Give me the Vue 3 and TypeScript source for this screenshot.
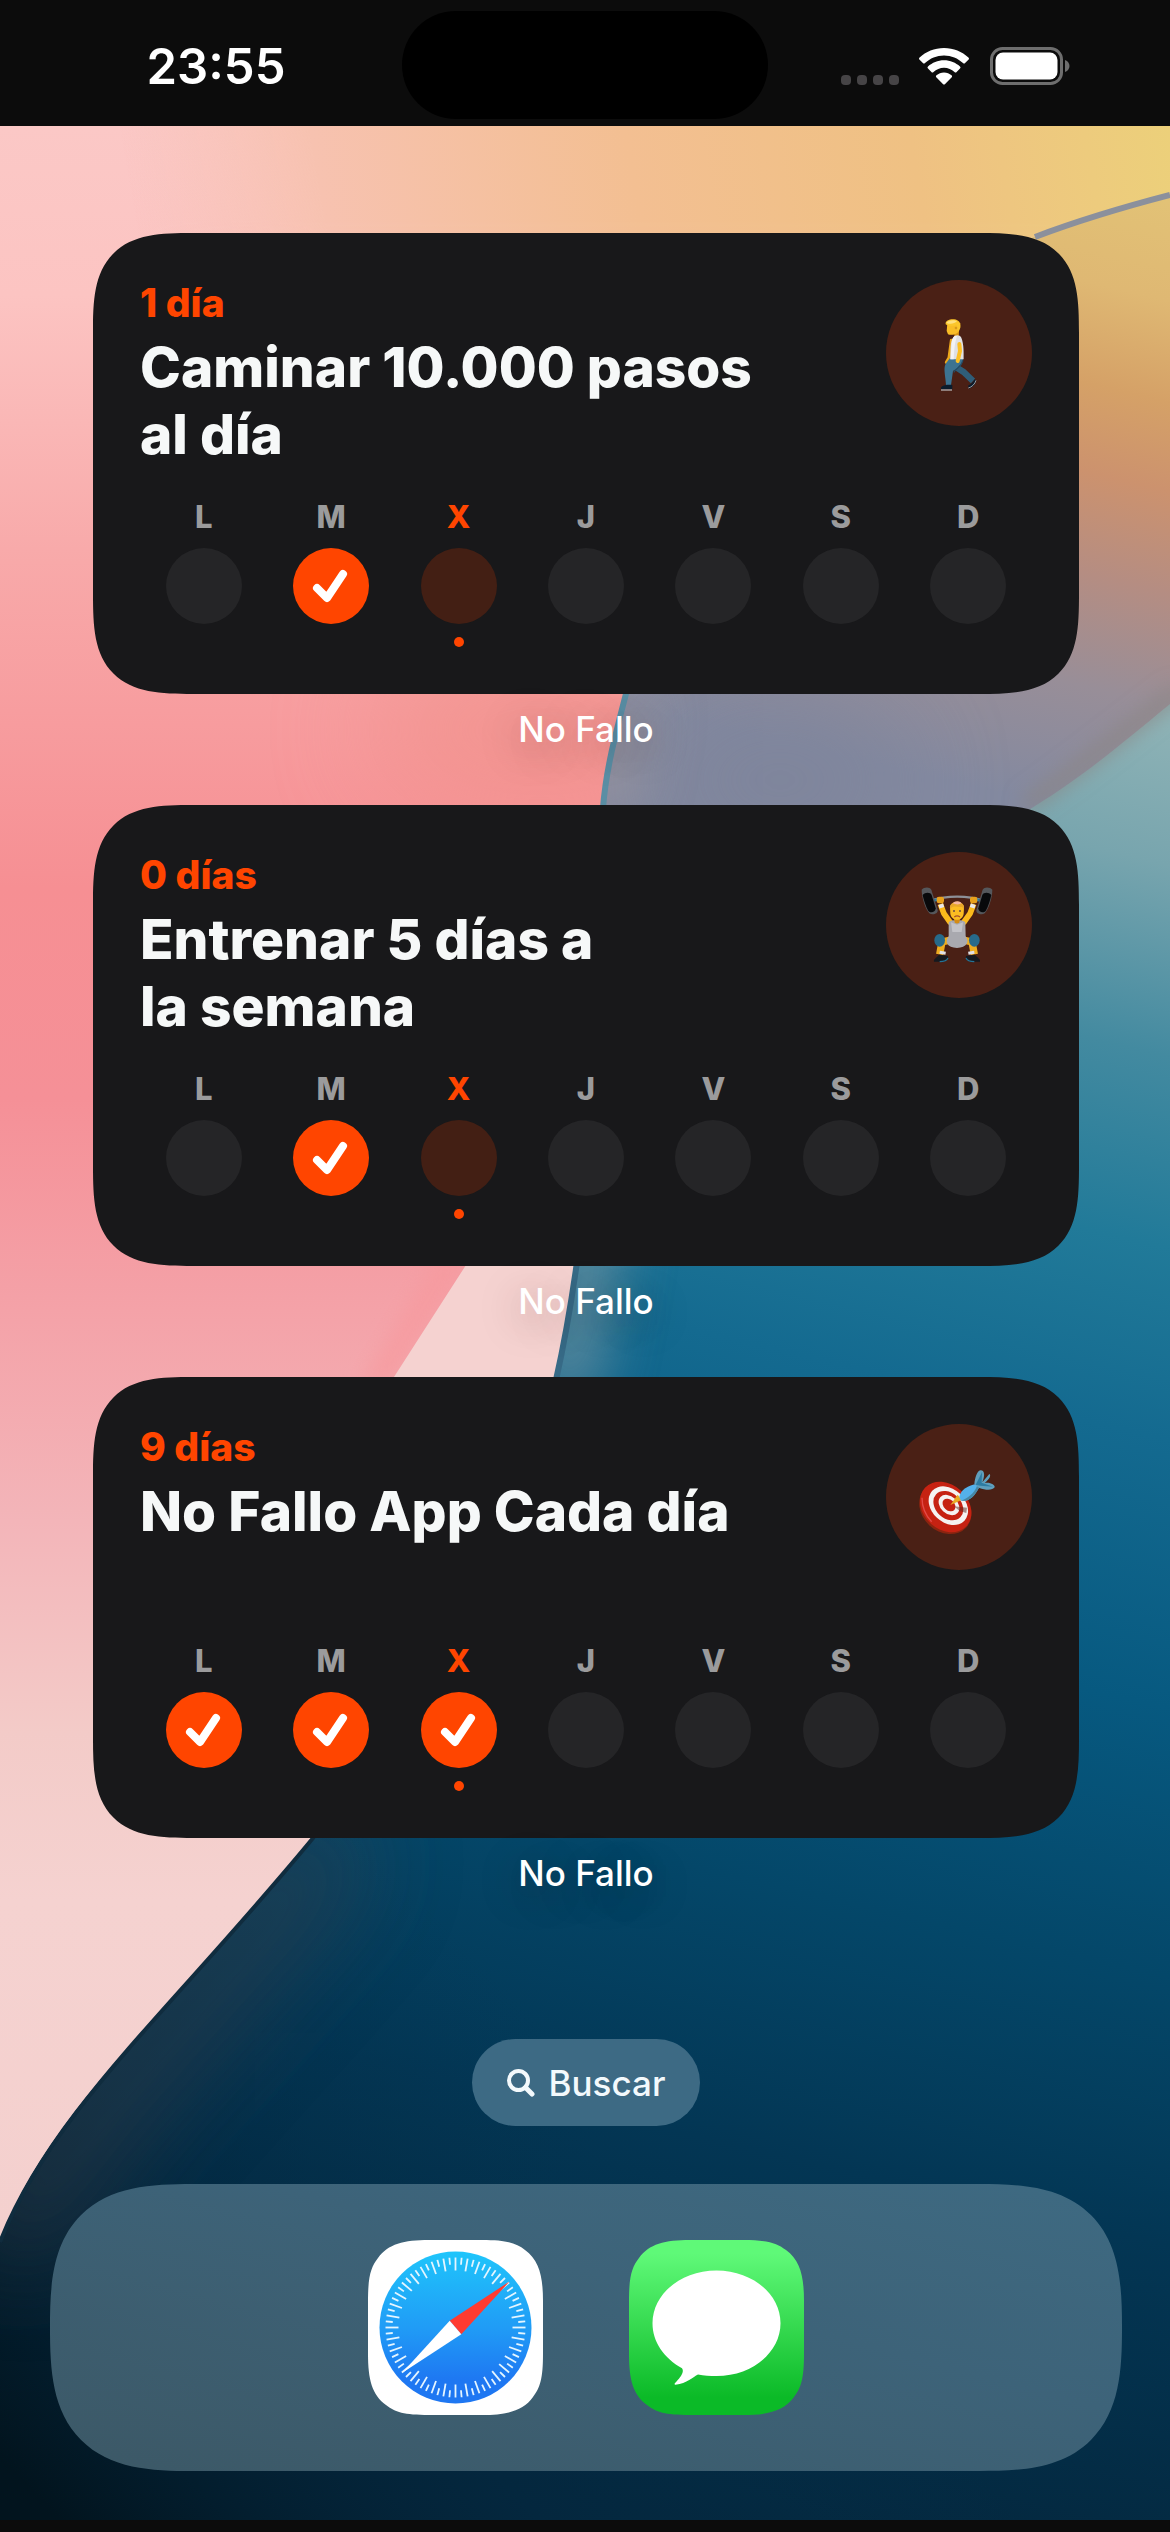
<script setup lang="ts">
type Emblem = 'walk' | 'lift' | 'target'

interface Habit {
  streak: string
  title: string
  emblem: Emblem
  done: number[]
}

const weekdays: string[] = ['L', 'M', 'X', 'J', 'V', 'S', 'D']
const today = 2

const habits: Habit[] = [
  { streak: '1 día', title: 'Caminar 10.000 pasos\nal día', emblem: 'walk', done: [1] },
  { streak: '0 días', title: 'Entrenar 5 días a\nla semana', emblem: 'lift', done: [1] },
  { streak: '9 días', title: 'No Fallo App Cada día', emblem: 'target', done: [0, 1, 2] },
]

const ticks = Array.from({ length: 72 }, (_, i) => ({ angle: i * 5, long: i % 2 === 0 }))
</script>

<template>
  <div class="phone">
    <header class="status">
      <time class="clock">23:55</time>
      <div class="island"></div>
      <div class="indicators">
        <span class="cell"><i v-for="n in 4" :key="n"></i></span>
        <svg class="wifi" viewBox="0 0 50 37" aria-label="Wi-Fi">
          <path d="M25 0C15.500 0 6.800 3.600 0.600 9.600a1.500 1.500 0 0 0 0 2.200l3.300 3.300a1.500 1.500 0 0 0 2.100 0C11 10.300 17.700 7.500 25 7.500s14 2.800 19 7.600a1.500 1.500 0 0 0 2.100 0l3.300-3.300a1.500 1.500 0 0 0 0-2.200C43.200 3.600 34.500 0 25 0Z" />
          <path d="M25 12.200c-6.200 0-11.800 2.400-16 6.200a1.500 1.500 0 0 0 0 2.200l3.400 3.400a1.500 1.500 0 0 0 2.100 0c2.800-2.600 6.500-4.200 10.500-4.200s7.700 1.600 10.500 4.200a1.500 1.500 0 0 0 2.100 0l3.400-3.400a1.500 1.500 0 0 0 0-2.200c-4.200-3.800-9.800-6.200-16-6.200Z" />
          <path d="M25 24.400c-2.900 0-5.500 1.100-7.500 2.900a1.500 1.500 0 0 0 0 2.200l6.400 6.500a1.500 1.500 0 0 0 2.200 0l6.400-6.500a1.500 1.500 0 0 0 0-2.200c-2-1.800-4.600-2.900-7.500-2.900Z" />
        </svg>
        <svg class="battery" viewBox="0 0 80 38" aria-label="Batería">
          <rect x="1.500" y="1.500" width="70" height="35" rx="11" fill="none" stroke="#6e6e6e" stroke-width="3" />
          <rect x="5.500" y="5.500" width="62" height="27" rx="7.500" />
          <path d="M75 13c3 1.200 4.500 3.400 4.500 6S78 23.800 75 25Z" fill="#6e6e6e" />
        </svg>
      </div>
    </header>

    <main class="home">
      <svg class="wallpaper" viewBox="0 126 1170 2394" preserveAspectRatio="none" aria-hidden="true">
        <defs>
          <linearGradient id="rose" gradientUnits="userSpaceOnUse" x1="0" y1="126" x2="0" y2="2240">
            <stop offset="0" stop-color="#fbc8c6" />
            <stop offset="0.080" stop-color="#fcc4c2" />
            <stop offset="0.200" stop-color="#f8aaaa" />
            <stop offset="0.360" stop-color="#f68f93" />
            <stop offset="0.460" stop-color="#f59097" />
            <stop offset="0.560" stop-color="#f4a2a8" />
            <stop offset="0.660" stop-color="#f3b5b9" />
            <stop offset="0.760" stop-color="#f3cbc8" />
            <stop offset="0.840" stop-color="#f5d2d0" />
            <stop offset="1" stop-color="#f4d0ce" />
          </linearGradient>
          <linearGradient id="dawn" gradientUnits="userSpaceOnUse" x1="150" y1="300" x2="1170" y2="120">
            <stop offset="0" stop-color="#f8c4b8" stop-opacity="0" />
            <stop offset="0.180" stop-color="#f7c2b0" />
            <stop offset="0.480" stop-color="#f3bf92" />
            <stop offset="0.750" stop-color="#efc183" />
            <stop offset="1" stop-color="#ecd07a" />
          </linearGradient>
          <linearGradient id="dawnFade" x1="0" y1="0" x2="0" y2="1">
            <stop offset="0" stop-color="#fff" />
            <stop offset="0.200" stop-color="#fff" />
            <stop offset="1" stop-color="#000" />
          </linearGradient>
          <mask id="dawnMask"><rect y="100" width="1170" height="600" fill="url(#dawnFade)" /></mask>
          <linearGradient id="petal" gradientUnits="userSpaceOnUse" x1="1170" y1="200" x2="1030" y2="800">
            <stop offset="0" stop-color="#e2c276" />
            <stop offset="0.160" stop-color="#dfb873" />
            <stop offset="0.320" stop-color="#d5a167" />
            <stop offset="0.460" stop-color="#cc926e" />
            <stop offset="0.620" stop-color="#b58d82" />
            <stop offset="0.800" stop-color="#988e98" />
            <stop offset="1" stop-color="#8389a0" />
          </linearGradient>
          <linearGradient id="sea" gradientUnits="userSpaceOnUse" x1="1120" y1="700" x2="700" y2="2520">
            <stop offset="0" stop-color="#8fb3b6" />
            <stop offset="0.080" stop-color="#78a5ae" />
            <stop offset="0.180" stop-color="#438aa0" />
            <stop offset="0.280" stop-color="#217a99" />
            <stop offset="0.380" stop-color="#146a90" />
            <stop offset="0.520" stop-color="#075980" />
            <stop offset="0.660" stop-color="#044769" />
            <stop offset="0.800" stop-color="#033654" />
            <stop offset="1" stop-color="#04263c" />
          </linearGradient>
          <linearGradient id="night" gradientUnits="userSpaceOnUse" x1="60" y1="2520" x2="560" y2="2040">
            <stop offset="0" stop-color="#02141e" />
            <stop offset="0.500" stop-color="#042840" stop-opacity="0.500" />
            <stop offset="1" stop-color="#033654" stop-opacity="0" />
          </linearGradient>
          <clipPath id="seaClip">
            <path d="M1170 195C1120 208 1080 220 1035 237C800 330 670 500 625 694C612 740 606 770 602 805C594 960 592 1160 576 1265C570 1305 564 1340 555 1376C510 1580 430 1710 315 1836C170 2010 50 2110 0 2240V2532H1170Z" />
          </clipPath>
          <filter id="soft" filterUnits="userSpaceOnUse" x="-200" y="0" width="1600" height="2600"><feGaussianBlur stdDeviation="30" /></filter>
          <filter id="softer" filterUnits="userSpaceOnUse" x="-200" y="0" width="1600" height="2600"><feGaussianBlur stdDeviation="50" /></filter>
          <filter id="slight" filterUnits="userSpaceOnUse" x="-200" y="0" width="1600" height="2600"><feGaussianBlur stdDeviation="10" /></filter>
        </defs>
        <rect y="100" width="1170" height="2440" fill="url(#rose)" />
        <rect y="100" width="1170" height="600" fill="url(#dawn)" mask="url(#dawnMask)" />
        <ellipse cx="540" cy="730" rx="170" ry="90" fill="#ef8f86" opacity="0.500" filter="url(#softer)" />
        <path d="M470 1255L390 1386L360 1386L440 1255Z" fill="#f7999d" opacity="0.700" filter="url(#slight)" />
        <path d="M500 1200L466 1265L394 1377L300 1500H700V1200Z" fill="#f5d2d0" />
        <g clip-path="url(#seaClip)">
          <rect y="100" width="1170" height="2440" fill="url(#sea)" />
          <rect y="1500" width="1170" height="1040" fill="url(#night)" />
          <path d="M606 1000C600 1200 590 1280 560 1400" fill="none" stroke="#8aa0a8" stroke-width="50" opacity="0.750" filter="url(#soft)" />
          <path d="M340 1830C200 2000 70 2110 0 2250" fill="none" stroke="#3a4048" stroke-width="90" opacity="0.550" filter="url(#softer)" />
          <path d="M1170 100V704C1120 745 1085 775 1035 806C900 890 760 960 600 1010L500 900V100Z" fill="url(#petal)" />
          <ellipse cx="780" cy="780" rx="130" ry="80" fill="#7d839a" opacity="0.600" filter="url(#softer)" />
          <path d="M625 690L600 810" stroke="#a39a9e" stroke-width="50" opacity="0.700" filter="url(#soft)" />
          <path d="M1180 690C1120 735 1085 765 1025 806" fill="none" stroke="#8b8583" stroke-width="12" filter="url(#slight)" />
        </g>
        <path d="M1170 195C1120 208 1080 220 1035 237" fill="none" stroke="#8b909c" stroke-width="6" />
        <path d="M627 690C614 740 606 770 603 808" fill="none" stroke="#5a8ea4" stroke-width="6" />
        <path d="M577 1262C571 1305 565 1340 556 1380" fill="none" stroke="#376a86" stroke-width="6" />
        <path d="M318 1832C172 2010 52 2110 0 2242" fill="none" stroke="#102c3e" stroke-width="4" />
      </svg>

      <section v-for="habit in habits" :key="habit.title" class="widget">
        <article class="card">
          <div class="head">
            <div class="copy">
              <p class="streak">{{ habit.streak }}</p>
              <h2 class="title">{{ habit.title }}</h2>
            </div>
            <svg v-if="habit.emblem === 'walk'" class="emblem" viewBox="79 59 438 438" aria-hidden="true">
              <path d="M285 318L312 335L340 362" fill="none" stroke="#2f5d78" stroke-width="19" stroke-linejoin="round" />
              <path d="M325 376C332 374 340 366 345 357L349 360C349 370 340 381 328 385Z" fill="#0c1c2c" />
              <path d="M326 383C337 380 346 371 349 360" fill="none" stroke="#d4dbe0" stroke-width="2" />
              <path d="M275 240L268 292L260 306" fill="none" stroke="#eda81c" stroke-width="9" stroke-linecap="round" />
              <path d="M271 293L310 294C310 315 294 322 280 332L274 375H259C258 348 250 325 258 310Z" fill="#3c7391" />
              <path d="M310 300C304 322 290 322 282 336" fill="none" stroke="#244c66" stroke-width="4" />
              <path d="M249 377C257 373 268 373 278 374L278 387H244C243 382 245 379 249 377Z" fill="#0c1c2c" />
              <path d="M244 389H277" stroke="#d4dbe0" stroke-width="3" />
              <path d="M284 215L298 213L297 232L284 230Z" fill="#dd9615" />
              <path d="M277 238C283 224 298 220 305 232C313 252 312 276 312 297H272C273 276 271 254 277 238Z" fill="#dfe0e4" />
              <path d="M277 240C281 226 288 224 292 228C283 255 284 275 282 297H272Z" fill="#f3f3f5" />
              <path d="M299 251L301 272L294 302" fill="none" stroke="#fcbf24" stroke-width="12" stroke-linecap="round" stroke-linejoin="round" />
              <path d="M263 190L261 212L265 222C275 226 291 222 297 214L302 188Z" fill="#f9bd26" />
              <path d="M258 192C256 181 270 176 283 177C298 178 305 190 302 202L297 214L291 206L292 195C281 198 266 198 258 192Z" fill="#fbc62a" />
              <path d="M260 187C270 178 284 178 292 183C284 191 270 193 260 187Z" fill="#ffe07d" />
              <circle cx="289" cy="203" r="4" fill="#d99a1a" />
            </svg>
            <svg v-else-if="habit.emblem === 'lift'" class="emblem" viewBox="79 65 438 438" aria-hidden="true">
              <path d="M215 210C260 195 325 195 370 210" fill="none" stroke="#8d9097" stroke-width="7" />
              <path d="M219 211L234 208M350 208L365 211" stroke="#2a7aa0" stroke-width="8" />
              <path d="M186 178C193 170 210 169 215 178L234 240C236 250 218 256 209 249C196 235 186 200 186 178Z" fill="#55575b" />
              <path d="M189 194C197 184 213 186 216 194L228 234C228 246 212 249 206 242C198 228 192 208 189 194Z" fill="#08090b" />
              <path d="M398 178C391 170 374 169 369 178L350 240C348 250 366 256 375 249C388 235 398 200 398 178Z" fill="#55575b" />
              <path d="M395 194C387 184 371 186 368 194L356 234C356 246 372 249 378 242C386 228 392 208 395 194Z" fill="#08090b" />
              <path d="M242 221L253 250L273 278M342 221L331 250L311 278" fill="none" stroke="#fcba1c" stroke-width="17" stroke-linejoin="round" />
              <path d="M238 229L252 225M332 225L346 229" stroke="#e9e9ee" stroke-width="11" />
              <rect x="231" y="199" width="22" height="20" rx="7" fill="#e8a11c" />
              <rect x="331" y="199" width="22" height="20" rx="7" fill="#e8a11c" />
              <path d="M240 372L247 335L285 326M344 372L337 335L299 326" fill="none" stroke="#eeac1f" stroke-width="22" stroke-linejoin="round" />
              <path d="M267 276C275 267 309 267 317 276L318 318C330 335 322 352 292 353C262 352 254 335 267 318Z" fill="#a9a9af" />
              <path d="M274 276L292 283L310 276L306 305H278Z" fill="#c3c3c8" />
              <path d="M282 264H302L299 276Q292 283 285 276Z" fill="#d58c15" />
              <path d="M271 231C271 211 313 211 313 231L312 250C308 274 276 274 272 250Z" fill="#fbbd22" />
              <path d="M271 236C268 207 316 207 313 236L307 229C296 232 281 223 271 236Z" fill="#e7a72b" />
              <path d="M279 219C285 211 301 211 306 219C298 224 287 223 279 219Z" fill="#f5b7a0" />
              <circle cx="283" cy="242" r="3" fill="#6b4c45" /><circle cx="301" cy="242" r="3" fill="#6b4c45" />
              <path d="M284 260Q292 253 301 260" fill="none" stroke="#a5502a" stroke-width="4" />
              <ellipse cx="240" cy="330" rx="16" ry="19" fill="#276a8a" />
              <ellipse cx="344" cy="330" rx="16" ry="19" fill="#276a8a" />
              <path d="M240 366L258 369M326 369L344 366" stroke="#e1e1e7" stroke-width="9" />
              <path d="M238 373L265 377C267 387 258 395 242 394H223C221 386 229 384 238 373ZM346 373L319 377C317 387 326 395 342 394H361C363 386 355 384 346 373Z" fill="#15191f" />
              <path d="M240 394C251 394 262 390 265 383M344 394C333 394 322 390 319 383" fill="none" stroke="#247396" stroke-width="4" />
            </svg>
            <svg v-else class="emblem" viewBox="79 69 438 438" aria-hidden="true">
              <ellipse cx="257" cy="322" rx="85" ry="70" transform="rotate(43 257 322)" fill="#8b2410" />
              <ellipse cx="258" cy="318" rx="85" ry="67" transform="rotate(43 258 318)" fill="#c62212" />
              <ellipse cx="266" cy="314" rx="66" ry="50" transform="rotate(43 266 314)" fill="#f5f2f1" />
              <ellipse cx="266" cy="314" rx="50" ry="38" transform="rotate(43 266 314)" fill="#c62212" />
              <ellipse cx="268" cy="312" rx="35" ry="26" transform="rotate(43 268 312)" fill="#f5f2f1" />
              <ellipse cx="268" cy="312" rx="22" ry="16" transform="rotate(43 268 312)" fill="#c62212" />
              <path d="M187 290C187 315 197 342 216 362" fill="none" stroke="#e14a47" stroke-width="4" />
              <path d="M283 316L322 320L320 336L300 330Z" fill="#5b2a22" opacity="0.500" />
              <path d="M272 312L294 281L306 297Z" fill="#e9ac25" />
              <path d="M299 288C302 265 326 253 352 248L359 258C345 287 327 303 304 299Z" fill="#54b1ea" />
              <path d="M304 299C326 303 345 287 359 258L352 255C343 278 324 292 304 299Z" fill="#4787a4" />
              <path d="M344 249C346 230 352 210 362 208C376 207 376 225 368 244L389 219C395 222 390 234 375 246C390 242 407 251 405 259C399 269 378 268 359 261Z" fill="#5f9fbd" />
              <path d="M348 251L367 214L366 245L400 257L362 254Z" fill="#2d7ca3" />
            </svg>
          </div>

          <ul class="week">
            <li v-for="(day, i) in weekdays" :key="day" class="day" :class="{ today: i === today, done: habit.done.includes(i) }">
              <span class="letter">{{ day }}</span>
              <span class="disc">
                <svg v-if="habit.done.includes(i)" viewBox="0 0 76 76" aria-label="Hecho">
                  <path d="M24 40L34 50L50 26" fill="none" stroke="#fff" stroke-width="8" stroke-linecap="round" stroke-linejoin="round" />
                </svg>
              </span>
              <span class="dot"></span>
            </li>
          </ul>
        </article>
        <p class="caption">No Fallo</p>
      </section>

      <button class="search" type="button">
        <svg viewBox="0 0 28 28" aria-hidden="true">
          <circle cx="11.500" cy="11.500" r="9.500" />
          <path d="M18.500 18.500L25 25" stroke-width="5" />
        </svg>
        <span>Buscar</span>
      </button>

      <nav class="dock" aria-label="Dock">
        <button class="app" type="button" aria-label="Safari">
          <svg viewBox="0 0 175 175">
            <defs>
              <linearGradient id="compass" x1="0" y1="0" x2="0" y2="1">
                <stop offset="0" stop-color="#1fc5fb" />
                <stop offset="0.500" stop-color="#209cf6" />
                <stop offset="0.850" stop-color="#1e77f2" />
              </linearGradient>
            </defs>
            <path d="M61 0H114C139 0 148 3 157 10C171 20 175 36 175 61V114C175 139 172 148 165 157C155 171 139 175 114 175H61C36 175 27 172 18 165C4 155 0 139 0 114V61C0 36 3 27 10 18C20 4 36 0 61 0Z" fill="#fff" />
            <circle cx="87.500" cy="87.500" r="76" fill="url(#compass)" />
            <path v-for="tick in ticks" :key="tick.angle" :d="tick.long ? 'M87.500 17.500V30.500' : 'M87.500 17.500V24.500'" :transform="`rotate(${tick.angle} 87.500 87.500)`" stroke="#e4f5ff" stroke-width="1.800" />
            <path d="M141.500 41.500L81.700 80.700L93.300 94.300Z" fill="#ff3b30" />
            <path d="M34 133L81.700 80.700L93.300 94.300Z" fill="#fff" />
          </svg>
        </button>
        <button class="app" type="button" aria-label="Mensajes">
          <svg viewBox="0 0 175 175">
            <defs>
              <linearGradient id="leaf" x1="0" y1="0" x2="0" y2="1">
                <stop offset="0.080" stop-color="#5ff978" />
                <stop offset="0.500" stop-color="#35d94f" />
                <stop offset="0.900" stop-color="#0bba27" />
              </linearGradient>
            </defs>
            <path d="M61 0H114C139 0 148 3 157 10C171 20 175 36 175 61V114C175 139 172 148 165 157C155 171 139 175 114 175H61C36 175 27 172 18 165C4 155 0 139 0 114V61C0 36 3 27 10 18C20 4 36 0 61 0Z" fill="url(#leaf)" />
            <path d="M87.500 30.500C123 30.500 151.500 54 151.500 83.300C151.500 112.500 123 136 87.500 136C81 136 75 135.500 69 134.500C64 137 58 143.500 46.500 144.700C44.500 144.500 46 143 47.500 141.500C52 137 55.500 131.500 53 128.300C35 118 23.500 102 23.500 83.300C23.500 54 52 30.500 87.500 30.500Z" fill="#fff" />
          </svg>
        </button>
      </nav>
    </main>
  </div>
</template>

<style>
body {
  margin: 0;
  background: #0c0c0c;
}
</style>

<style scoped>
.phone {
  display: flex;
  flex-direction: column;
  min-height: 100vh;
  font-family: Inter, "Liberation Sans", sans-serif;
  color: #fff;
  background: #0c0c0c;
}

p,
h2,
ul {
  margin: 0;
  padding: 0;
}

button {
  border: 0;
  padding: 0;
  font: inherit;
  color: inherit;
  background: none;
}

svg {
  display: block;
}

.status {
  display: grid;
  grid-template-columns: 1fr 366px 1fr;
  align-items: center;
  height: 126px;
}

.clock {
  padding: 8px 0 0 30px;
  text-align: center;
  font-size: 49px;
  font-weight: 600;
  line-height: 60px;
}

.island {
  height: 108px;
  margin-top: 4px;
  border-radius: 54px;
  background: #000;
}

.indicators {
  display: flex;
  align-items: flex-end;
  justify-content: flex-end;
  padding: 6px 100px 0 0;
}

.cell {
  display: flex;
  gap: 6px;
  margin-right: 20px;
}

.cell i {
  width: 10px;
  height: 10px;
  border-radius: 4px;
  background: #464446;
}

.wifi {
  width: 50px;
  height: 37px;
  margin-right: 21px;
  fill: #fff;
}

.battery {
  width: 80px;
  height: 38px;
  fill: #fff;
}

.home {
  position: relative;
  z-index: 0;
  display: flex;
  flex: 1;
  flex-direction: column;
  align-items: center;
  margin-bottom: 12px;
  padding: 107px 48px 49px 50px;
}

.wallpaper {
  position: absolute;
  z-index: -1;
  inset: 0;
  width: 100%;
  height: 100%;
}

.widget {
  align-self: stretch;
  margin: 0 43px 55px;
}

.card {
  padding: 47px;
  border-radius: 72px;
  background: #18181a;
}

.head {
  display: flex;
  align-items: flex-start;
  justify-content: space-between;
}

.streak {
  font-size: 39px;
  font-weight: 800;
  line-height: 46px;
  color: #ff4500;
}

.title {
  min-height: 134px;
  margin-top: 8px;
  font-size: 55px;
  font-weight: 800;
  line-height: 67px;
  white-space: pre-line;
  color: #f6f8f8;
}

.emblem {
  flex: none;
  width: 146px;
  height: 146px;
  border-radius: 50%;
  background: #4a2015;
}

.week {
  display: grid;
  grid-template-columns: repeat(7, 1fr);
  margin-top: 30px;
  list-style: none;
}

.day {
  display: flex;
  flex-direction: column;
  align-items: center;
}

.letter {
  font-size: 31px;
  font-weight: 800;
  line-height: 38px;
  color: #9b9b9c;
}

.disc {
  width: 76px;
  height: 76px;
  margin: 12px 0 13px;
  border-radius: 50%;
  background: #252527;
}

.dot {
  width: 10px;
  height: 10px;
  border-radius: 50%;
}

.today .letter {
  color: #ff4500;
}

.today .disc {
  background: #431f14;
}

.today .dot,
.done .disc {
  background: #ff4500;
}

.caption {
  margin-top: 14px;
  font-size: 35px;
  font-weight: 500;
  line-height: 42px;
  text-align: center;
  text-shadow: 0 8px 40px rgba(60, 20, 20, 0.4);
}

.search {
  display: flex;
  align-items: center;
  gap: 14px;
  height: 87px;
  margin-top: 90px;
  padding: 0 35px;
  border-radius: 44px;
  font-size: 35px;
  font-weight: 500;
  line-height: 42px;
  color: #f3f9fc;
  background: #3d6a84;
}

.search svg {
  width: 28px;
  height: 28px;
  fill: none;
  stroke: currentColor;
  stroke-width: 4;
  stroke-linecap: round;
}

.dock {
  display: flex;
  align-items: center;
  justify-content: center;
  align-self: stretch;
  gap: 86px;
  height: 287px;
  margin-top: 58px;
  border-radius: 106px;
  background: linear-gradient(15deg, #3c5866, #3d6379 60%, #3e6a82);
}

/* Continuous-curvature corners where the browser can draw them */
@supports (corner-shape: squircle) {
  .card {
    border-radius: 100px;
    corner-shape: superellipse(1.6);
  }

  .dock {
    border-radius: 143px;
    corner-shape: superellipse(1.5);
  }
}

.app {
  width: 175px;
  height: 175px;
}
</style>
